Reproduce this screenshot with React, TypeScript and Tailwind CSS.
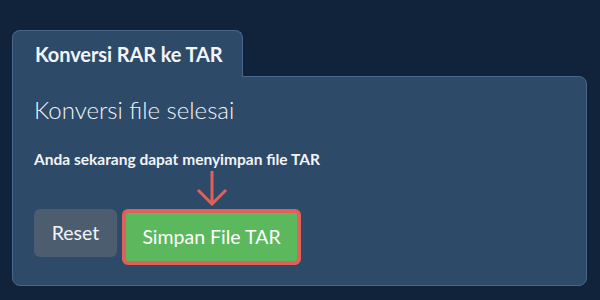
export default function App() {
  return (
    <div className="min-h-[300px] w-[600px] bg-[#11233a] px-3 pt-[30px] font-['Lato','Liberation_Sans',sans-serif] text-[#f2f4f7]">
      <div className="relative z-10 -mb-px flex h-[47px] w-[231px] items-center rounded-t-lg border border-b-0 border-[#4a6789] bg-[#2d4a69] pl-[22px]">
        <h2 className="text-[20px] font-bold tracking-[-0.1px]">Konversi RAR ke TAR</h2>
      </div>
      <div className="h-[210px] w-[575px] rounded-lg rounded-tl-none border border-[#4a6789] bg-[#2d4a69] px-[21px] pt-[18px]">
        <p className="text-[24px] font-light leading-[30px]">Konversi file selesai</p>
        <p className="mt-[24px] text-[15.5px] font-bold leading-[20px]">Anda sekarang dapat menyimpan file TAR</p>
        <div className="mt-[40px] flex items-start gap-[5px]">
          <button
            type="button"
            className="h-[48px] w-[83px] rounded-md bg-[#4c5d70] text-[19.5px] text-[#f2f4f7]"
          >
            Reset
          </button>
          <div className="relative">
            <svg
              className="absolute bottom-full left-1/2 mb-[3px] -translate-x-1/2"
              width="32"
              height="36"
              viewBox="0 0 32 36"
              fill="none"
              stroke="#e0605a"
              strokeWidth="3"
            >
              <path d="M16 1 V33" />
              <path d="M2 20 L16 34 L30 20" />
            </svg>
            <button
              type="button"
              className="h-[56px] w-[179px] rounded-md border-4 border-[#e0605a] bg-[#5cb85c] text-[19.5px] text-white"
            >
              Simpan File TAR
            </button>
          </div>
        </div>
      </div>
    </div>
  )
}
